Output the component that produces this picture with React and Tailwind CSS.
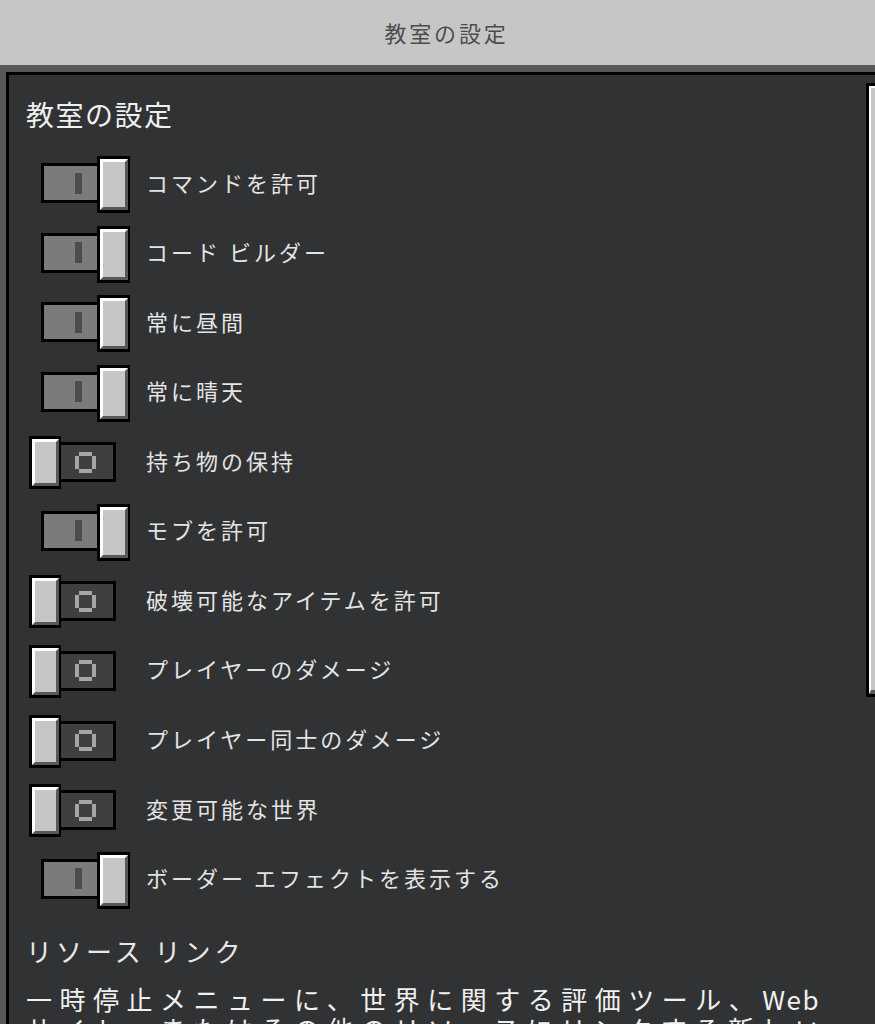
import React from "react";

const rows = [
  ["コマンドを許可", true],
  ["コード ビルダー", true],
  ["常に昼間", true],
  ["常に晴天", true],
  ["持ち物の保持", false],
  ["モブを許可", true],
  ["破壊可能なアイテムを許可", false],
  ["プレイヤーのダメージ", false],
  ["プレイヤー同士のダメージ", false],
  ["変更可能な世界", false],
  ["ボーダー エフェクトを表示する", true],
];

function Knob({ on }) {
  return (
    <div
      className={
        on
          ? "relative z-10 w-[33px] h-[57px] shrink-0 bg-black pl-[3px] pt-[3px] pr-[2px] pb-[3px]"
          : "relative z-10 w-[32px] h-[53px] shrink-0 bg-black pl-[3px] pt-[3px] pr-[2px] pb-[3px]"
      }
    >
      <div className="h-full w-full bg-[#c6c6c6] border-t-[3px] border-l-[3px] border-r-[3px] border-b-[3px] border-t-white border-l-white border-r-[#585858] border-b-[#585858]" />
    </div>
  );
}

function Toggle({ on }) {
  if (on) {
    return (
      <div className="w-[101px] flex items-start justify-end shrink-0">
        <div className="mt-[7px] -mr-[3px] w-[59px] h-[40px] bg-black p-[3px]">
          <div className="h-full bg-[#7b7b7b] flex items-center justify-end pr-[15px]">
            <div className="w-[7px] h-[21px] bg-[#4c4c4c]" />
          </div>
        </div>
        <Knob on />
      </div>
    );
  }
  return (
    <div className="w-[101px] flex items-start justify-start shrink-0">
      <Knob on={false} />
      <div className="mt-[6px] -ml-[3px] w-[58px] h-[40px] bg-black p-[3px]">
        <div className="h-full bg-[#3f3f40] flex items-center justify-start pl-[14px]">
          <svg width="21" height="21" viewBox="0 0 21 21">
            <rect x="4" y="0" width="13" height="4" fill="#a6a6a6" />
            <rect x="4" y="17" width="13" height="4" fill="#a6a6a6" />
            <rect x="0" y="4" width="4" height="13" fill="#a6a6a6" />
            <rect x="17" y="4" width="4" height="13" fill="#a6a6a6" />
          </svg>
        </div>
      </div>
    </div>
  );
}

export default function App() {
  return (
    <div className="w-[875px] h-[1024px] overflow-hidden bg-[#58585a] flex flex-col font-['Noto_Sans_CJK_JP','Noto_Sans',sans-serif]">
      <div className="h-[65px] shrink-0 bg-[#c6c6c6] flex items-center justify-center pl-[18px] pb-[2px]">
        <span className="text-[22px] leading-[30px] tracking-[2.8px] text-[#4d4d4d]">教室の設定</span>
      </div>
      <div className="h-[7px] shrink-0" />
      <div className="ml-[6px] flex-1 min-h-0 border-l-[3px] border-t-[3px] border-black bg-[#313233] flex">
        <div className="flex-1 min-w-0 pl-[17px] pt-[19px] flex flex-col">
          <div className="text-[28px] leading-[40px] tracking-[1.5px] text-[#f0f0f0]">教室の設定</div>
          <div className="mt-[22px] flex flex-col gap-[12.57px]">
            {rows.map(([label, on]) => (
              <div key={label} className="h-[57px] flex items-center ml-[3px]">
                <Toggle on={on} />
                <span className="ml-[16px] mb-[6px] text-[22px] leading-[30px] tracking-[3px] text-[#e4e4e4] whitespace-nowrap">
                  {label}
                </span>
              </div>
            ))}
          </div>
          <div className="mt-[24px] text-[26px] leading-[36px] tracking-[4px] text-[#e8e8e8] whitespace-nowrap">
            リソース リンク
          </div>
          <div className="mt-[15px] text-[26px] leading-[30px] tracking-[7.5px] text-[#f0f0f0] whitespace-nowrap">
            <div>
              一時停止メニューに、世界に関する評価ツール、<span className="tracking-[1.5px]">Web</span>
            </div>
            <div>サイト、またはその他のリソースにリンクする新しい</div>
          </div>
        </div>
        <div className="w-[9px] shrink-0 pt-[8px]">
          <div className="h-[614px] bg-black pl-[3px] pt-[3px] pb-[3px]">
            <div className="h-full bg-[#c6c6c6] border-t-2 border-l-2 border-white border-b-[4px] border-b-[#5a5a5a]" />
          </div>
        </div>
      </div>
    </div>
  );
}
